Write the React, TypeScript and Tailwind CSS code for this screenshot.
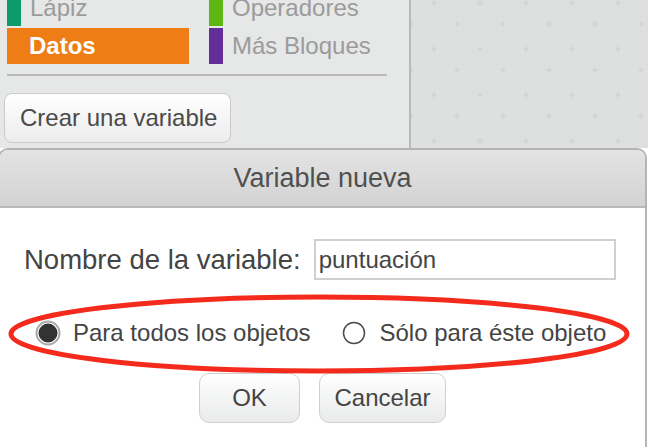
import React from 'react';

const categories = [
  { name: 'Lápiz', color: 'bg-[#0e9a6c]', active: false },
  { name: 'Operadores', color: 'bg-[#5cb712]', active: false },
  { name: 'Datos', color: 'bg-[#ee7d16]', active: true },
  { name: 'Más Bloques', color: 'bg-[#632d99]', active: false },
];

function Category({ name, color, active }: { name: string; color: string; active: boolean }) {
  if (active) {
    return (
      <div className={`h-[36px] flex items-center pl-[22px] ${color}`}>
        <span className="text-[24px] leading-none font-bold text-white">{name}</span>
      </div>
    );
  }
  return (
    <div className="h-[36px] flex items-center">
      <div className={`w-[14px] h-full ${color}`} />
      <span className="ml-[9px] text-[24px] leading-none text-[#9b9b9b]">{name}</span>
    </div>
  );
}

function RadioOn() {
  return (
    <svg width="26" height="26" viewBox="0 0 26 26">
      <circle cx="13" cy="13" r="11.5" fill="#fff" stroke="#a9a9a9" strokeWidth="2" />
      <circle cx="13" cy="13" r="9" fill="#333" stroke="#222" strokeWidth="1" />
    </svg>
  );
}

function RadioOff() {
  return (
    <svg width="26" height="26" viewBox="0 0 26 26">
      <circle cx="13" cy="13" r="10.5" fill="#fff" stroke="#4a4a4a" strokeWidth="1.5" />
    </svg>
  );
}

export default function App() {
  return (
    <div
      className="relative w-[648px] h-[447px] overflow-hidden bg-white"
      style={{ fontFamily: '"Liberation Sans", Arial, sans-serif' }}
    >
      {/* editor behind the dialog */}
      <div className="flex h-[148px]">
        <div className="w-[411px] bg-[#e6e7e7] border-r-2 border-[#b9b9b9] overflow-hidden">
          <div className="-mt-[10px] px-[7px] grid grid-cols-[182px_1fr] gap-x-[20px] gap-y-[2px]">
            {categories.map((c) => (
              <Category key={c.name} {...c} />
            ))}
          </div>
          <div className="ml-[7px] mt-[10px] w-[380px] h-[2px] bg-[#bababa]" />
          <button className="ml-[4px] mt-[17px] w-[227px] h-[50px] rounded-[8px] border border-[#cbcbcb] bg-gradient-to-b from-white to-[#ececec] text-left pl-[15px] text-[24px] leading-none text-[#4a4a4a]">
            Crear una variable
          </button>
        </div>
        <div className="flex-1 bg-[#dedfdf]">
          <svg width="100%" height="100%">
            <defs>
              <pattern id="plus" width="46" height="46" patternUnits="userSpaceOnUse">
                <path d="M23 0v6M20 3h6" stroke="#d2d3d3" strokeWidth="1.5" />
                <path d="M0 21v6M-3 24h6M46 21v6M43 24h6" stroke="#d2d3d3" strokeWidth="1.5" />
              </pattern>
            </defs>
            <rect width="100%" height="100%" fill="url(#plus)" />
          </svg>
        </div>
      </div>

      {/* dialog */}
      <div className="-ml-[2px] w-[649px] h-[320px] rounded-t-[10px] border-2 border-[#b4b4b4] bg-white overflow-hidden">
        <div className="h-[58px] flex items-center justify-center bg-gradient-to-b from-[#e3e3e3] to-[#d3d3d3] border-b-2 border-[#b9b9b9]">
          <span className="text-[27px] leading-none text-[#505050]">Variable nueva</span>
        </div>

        <div className="pt-[31px] pl-[24px] flex items-center h-[41px] box-content">
          <span className="text-[27.5px] leading-none text-[#444]">Nombre de la variable:</span>
          <div className="ml-[13px] w-[302px] h-[41px] border-2 border-[#cfcfcf] flex items-center pl-[3px]">
            <span className="text-[24px] leading-none text-[#444]">puntuación</span>
          </div>
        </div>

        <div className="mt-[40px] pl-[35px] flex items-center h-[26px]">
          <RadioOn />
          <span className="ml-[12px] text-[24px] leading-none text-[#444]">Para todos los objetos</span>
          <div className="ml-[31px]">
            <RadioOff />
          </div>
          <span className="ml-[12px] text-[24px] leading-none text-[#444]">Sólo para éste objeto</span>
        </div>

        <div className="mt-[27px] pl-[199px] flex gap-[19px]">
          <button className="w-[101px] h-[50px] rounded-[10px] border border-[#cfcfcf] bg-gradient-to-b from-white to-[#e9eaea] text-[24px] leading-none text-[#444]">
            OK
          </button>
          <button className="w-[127px] h-[50px] rounded-[10px] border border-[#cfcfcf] bg-gradient-to-b from-white to-[#e9eaea] text-[24px] leading-none text-[#444]">
            Cancelar
          </button>
        </div>
      </div>

      {/* red annotation ellipse */}
      <svg className="absolute left-[6px] top-[293px] pointer-events-none" width="628" height="84" viewBox="0 0 628 84">
        <ellipse cx="313" cy="41" rx="308" ry="37" fill="none" stroke="#f42a1c" strokeWidth="5" />
      </svg>
    </div>
  );
}
